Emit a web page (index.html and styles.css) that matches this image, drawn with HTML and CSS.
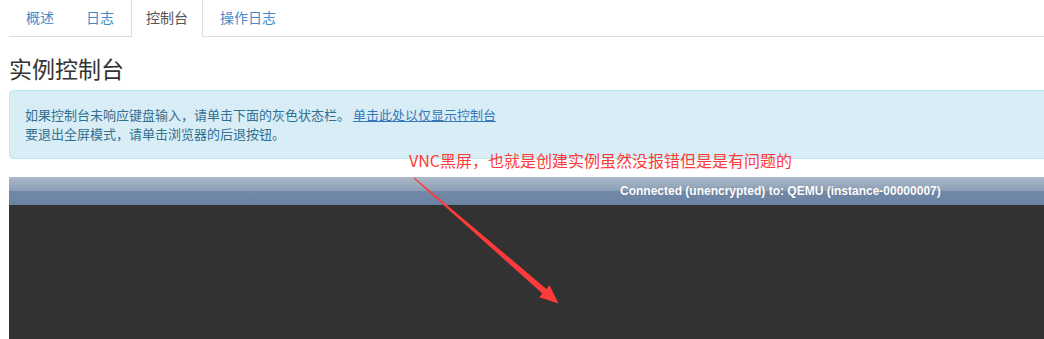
FILE: index.html
```html
<!DOCTYPE html>
<html lang="zh-CN">
<head>
<meta charset="utf-8">
<title>实例控制台</title>
<link rel="stylesheet" href="styles.css">
</head>
<body>
<div class="page">
  <ul class="nav-tabs">
    <li class="tab"><a href="#">概述</a></li>
    <li class="tab"><a href="#">日志</a></li>
    <li class="tab active"><a href="#">控制台</a></li>
    <li class="tab"><a href="#">操作日志</a></li>
  </ul>
  <h2 class="title">实例控制台</h2>
  <div class="alert">
    <p>如果控制台未响应键盘输入，请单击下面的灰色状态栏。 <a href="#" class="alert-link">单击此处以仅显示控制台</a></p>
    <p>要退出全屏模式，请单击浏览器的后退按钮。</p>
  </div>
  <div class="vnc">
    <div class="vnc-status">Connected (unencrypted) to: QEMU (instance-00000007)</div>
    <div class="vnc-screen"></div>
  </div>
  <div class="note">VNC黑屏，也就是创建实例虽然没报错但是是有问题的</div>
  <svg class="arrow" width="1044" height="339" viewBox="0 0 1044 339">
    <polygon points="414.3,177.6 546.4,288.9 549.6,285.2 558.5,303.5 539.2,297.2 542.4,293.5 413.7,178.4" fill="#ff3a3a"/>
  </svg>
</div>
</body>
</html>
```
FILE: styles.css
```css
html, body {
  margin: 0;
  padding: 0;
  background: #fff;
  overflow: hidden;
}
.page {
  position: relative;
  width: 1080px;
  height: 339px;
  padding-left: 9px;
  font-family: "Noto Sans CJK SC", "Liberation Sans", sans-serif;
  color: #333;
  overflow: hidden;
}
.nav-tabs {
  list-style: none;
  margin: 0;
  padding: 0 0 0 2px;
  display: flex;
  border-bottom: 1px solid #ddd;
  height: 36px;
}
.tab {
  margin-right: 2px;
  margin-bottom: -1px;
}
.tab a {
  display: block;
  height: 36px;
  box-sizing: border-box;
  padding: 7px 14px 0;
  font-size: 14px;
  line-height: 20px;
  color: #428bca;
  text-decoration: none;
  border: 1px solid transparent;
  border-top: 0;
  border-bottom: 0;
}
.tab.active a {
  color: #555;
  background: #fff;
  border-color: #ddd;
  height: 37px;
}
.title {
  margin: 16px 0 7px;
  font-size: 23px;
  line-height: 30px;
  font-weight: 400;
  color: #333;
}
.alert {
  background: #d9edf7;
  border: 1px solid #bce8f1;
  border-radius: 4px;
  padding: 15px;
  color: #31708f;
  font-size: 13px;
  line-height: 18.5px;
  margin-bottom: 18px;
}
.alert p {
  margin: 0;
}
.alert-link {
  color: #3578b8;
  text-decoration: underline;
}
.vnc {
  background: #323232;
}
.vnc-status {
  height: 28px;
  box-sizing: border-box;
  padding: 7px 0 0 611px;
  background: linear-gradient(#acb9ca 0%, #8b9db5 50%, #7288a7 50%, #6b83a3 100%);
  color: #fff;
  font-family: "Liberation Sans", Arial, sans-serif;
  font-weight: 700;
  font-size: 12px;
  line-height: 14px;
  text-shadow: 0 0 1px rgba(0,0,0,0.2);
}
.vnc-screen {
  height: 140px;
  background: #323232;
}
.note {
  position: absolute;
  left: 409px;
  top: 149px;
  font-size: 16px;
  line-height: 22px;
  color: #ff3a3a;
  white-space: nowrap;
}
.arrow {
  position: absolute;
  left: 0;
  top: 0;
  pointer-events: none;
}
```
